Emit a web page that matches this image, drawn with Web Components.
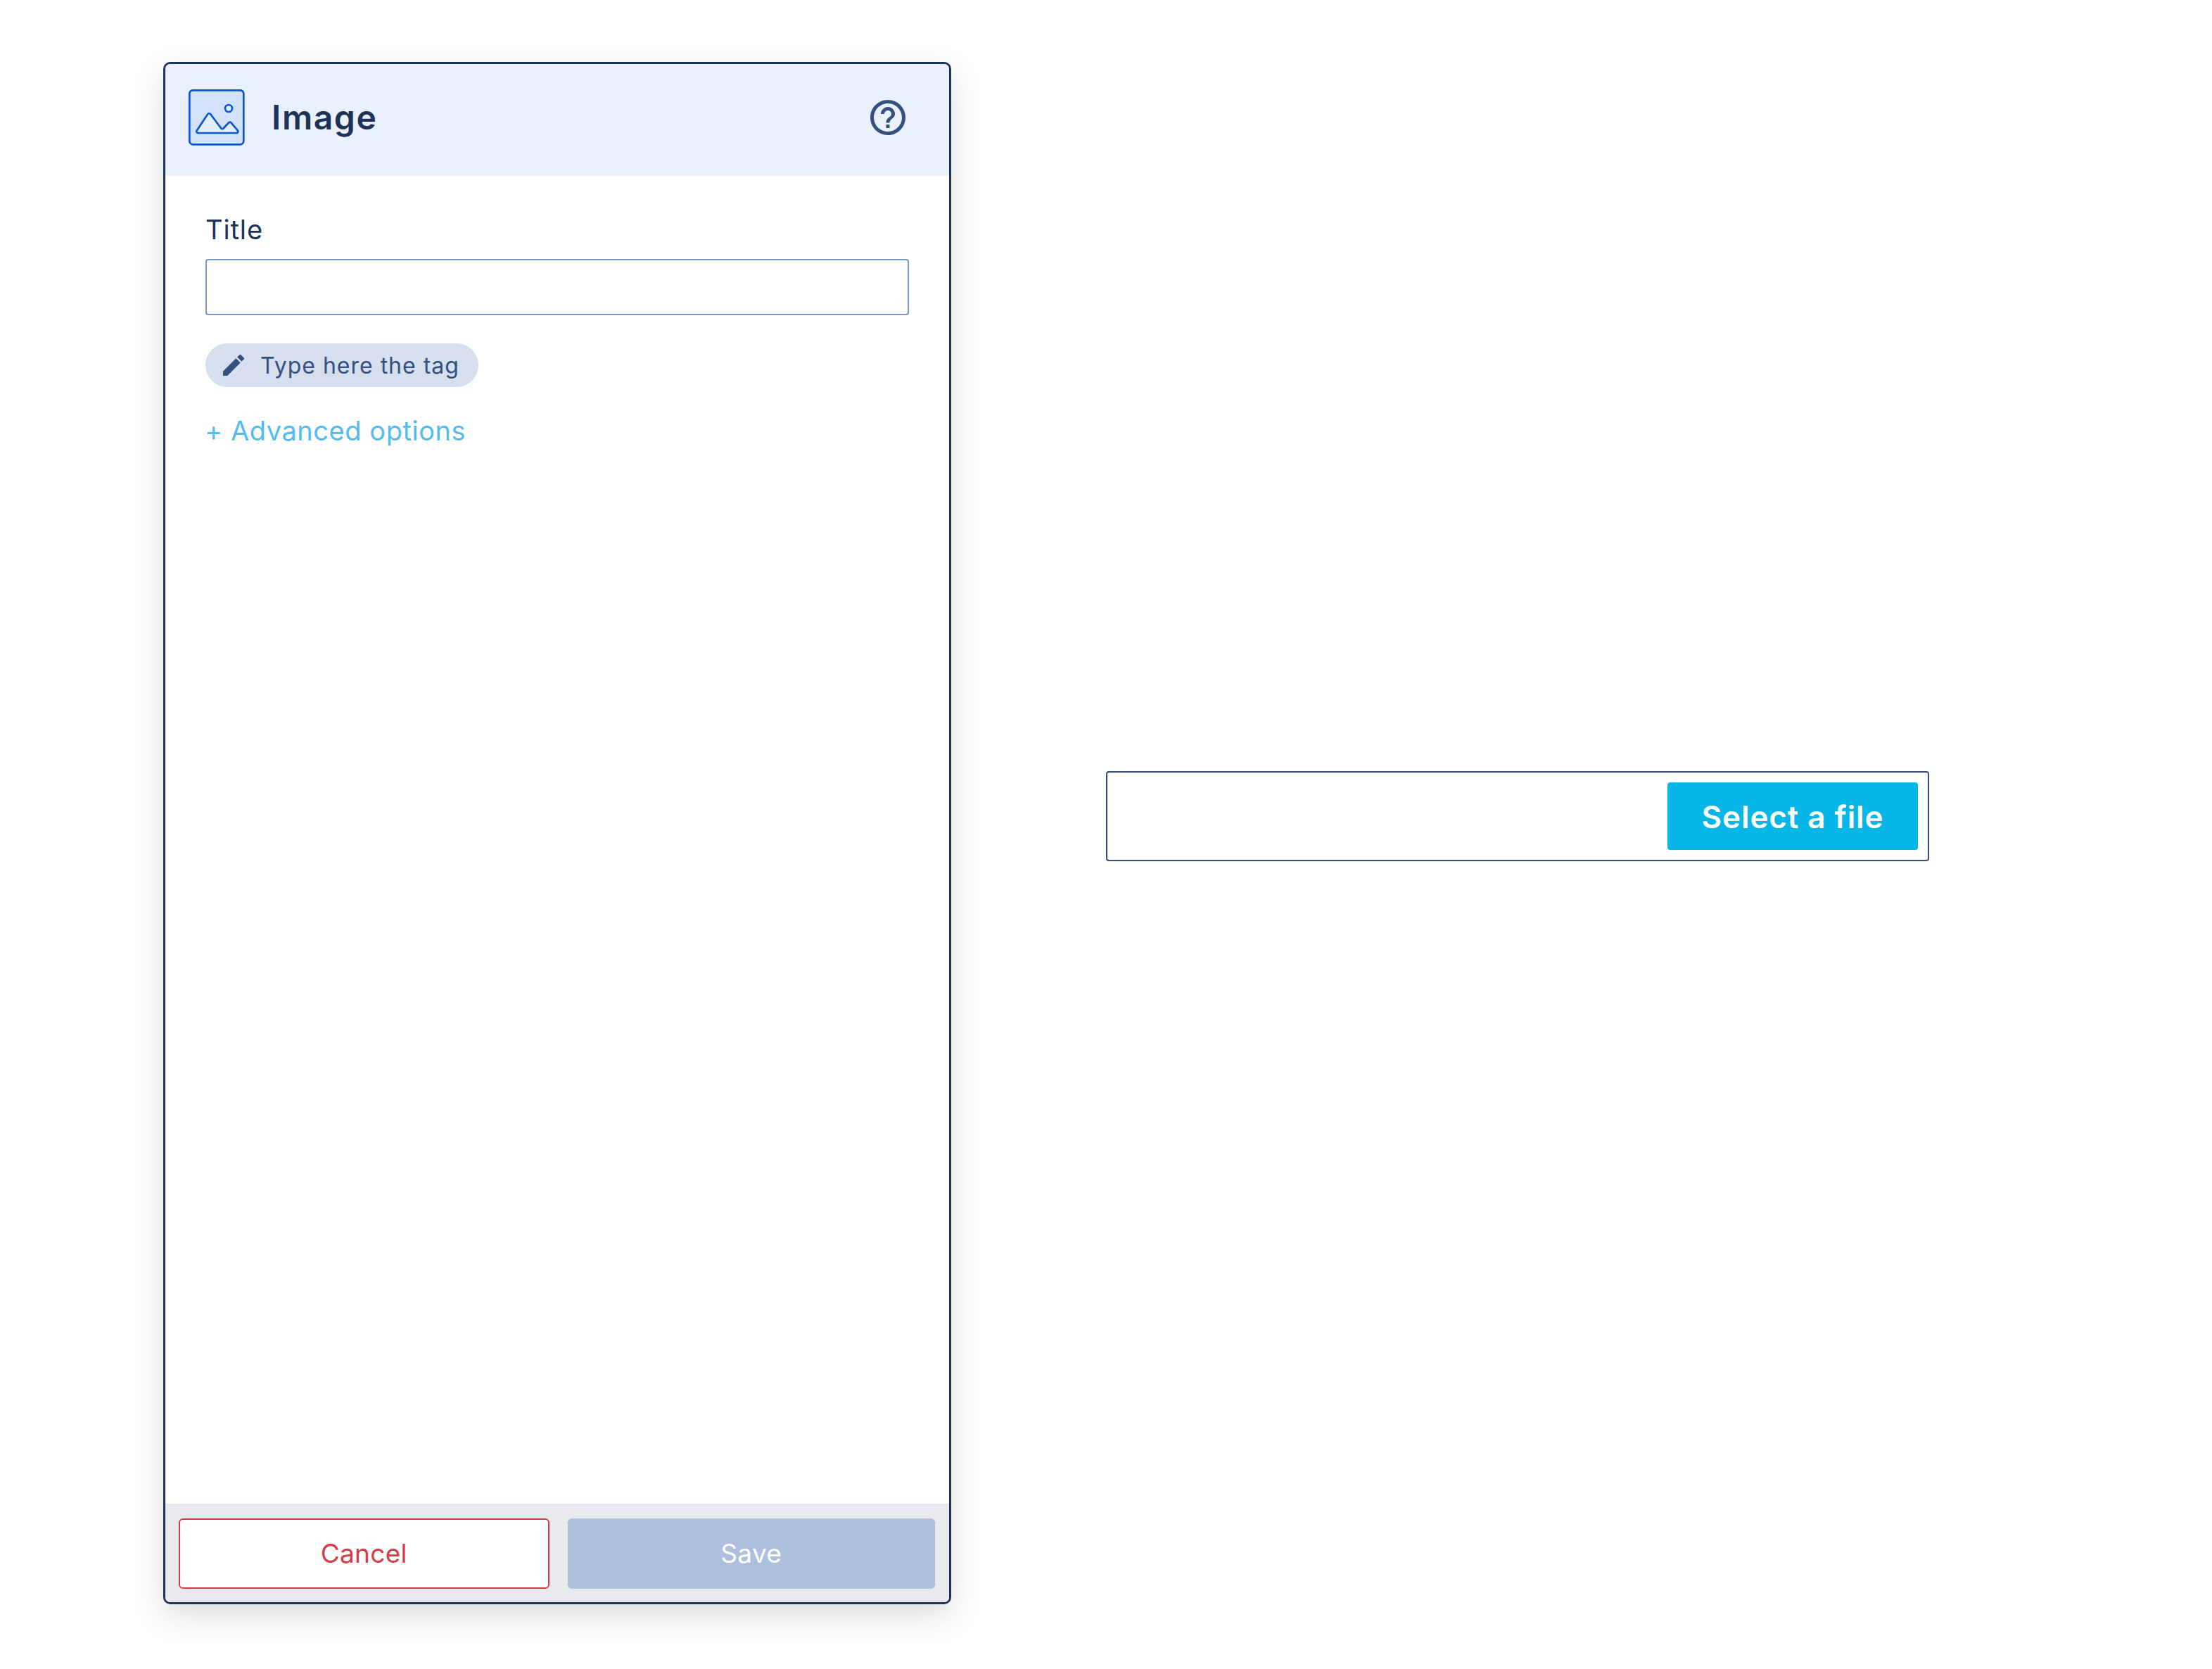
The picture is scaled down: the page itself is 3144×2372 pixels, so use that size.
<!DOCTYPE html>
<html lang="en">
<head>
<meta charset="utf-8">
<title>Image</title>
<style>
    html, body { margin: 0; background: #fff; }
    body { font-family: Inter, "Liberation Sans", sans-serif; }
    .stage { display: flex; align-items: flex-start; padding: 88px 0 0 232px; gap: 220px; height: 2372px; box-sizing: border-box; overflow: hidden; }
</style>
</head>
<body>
<div class="stage">
    <image-panel heading="Image">
        <form-field label="Title"></form-field>
        <tag-chip>Type here the tag</tag-chip>
        <text-link>+ Advanced options</text-link>
        <action-button slot="footer" kind="cancel">Cancel</action-button>
        <action-button slot="footer" kind="save">Save</action-button>
    </image-panel>
    <file-picker>Select a file</file-picker>
</div>

<script>
// Panel with header, form body and footer bar
class ImagePanel extends HTMLElement {
    constructor() {
        super();
        this.attachShadow({ mode: 'open' });
        this.shadowRoot.innerHTML = `
            <style>
                :host {
                    display: flex;
                    flex-direction: column;
                    box-sizing: border-box;
                    width: 1120px;
                    height: 2192px;
                    border: 3px solid #1d3358;
                    border-radius: 10px;
                    background: #fff;
                    box-shadow: 0 16px 44px rgba(20, 30, 50, 0.15);
                    overflow: hidden;
                }
                header {
                    display: flex;
                    align-items: center;
                    height: 159px;
                    flex: none;
                    box-sizing: border-box;
                    padding: 0 57px 8px 33px;
                    background: #eaf1fd;
                }
                .glyph { width: 80px; height: 80px; flex: none; display: block; }
                h1 {
                    flex: 1;
                    margin: 0 0 0 38px;
                    font: 600 48px Inter, "Liberation Sans", sans-serif;
                    letter-spacing: 1.6px;
                    color: #1c3357;
                }
                .help { width: 60px; height: 60px; display: block; fill: #33507e; }
                main {
                    flex: 1;
                    display: flex;
                    flex-direction: column;
                    align-items: flex-start;
                    padding: 52px 57px 0;
                }
                footer {
                    display: flex;
                    flex: none;
                    gap: 26px;
                    height: 140px;
                    box-sizing: border-box;
                    padding: 21px 20px 19px 19px;
                    background: #e8eaee;
                }
            </style>
            <header>
                <svg class="glyph" viewBox="0 0 80 80">
                    <rect x="1.300" y="1.300" width="77" height="77" rx="5" fill="#d3e1fa" stroke="#0a55d0" stroke-width="2.700"/>
                    <circle cx="57" cy="27" r="5" fill="#e5eefc" stroke="#0a55d0" stroke-width="2.700"/>
                    <path d="M13.500 62h54.500c2 0 3-2 1.800-3.600L60.500 47.500c-1-1.200-2.500-1.200-3.500 0l-7.500 8c-1 1-2.500 1-3.300-.2L31 35c-1-1.300-2.700-1.300-3.600 0L11.800 58.400C10.600 60 11.500 62 13.500 62z" fill="#e5eefc" stroke="#0a55d0" stroke-width="2.700" stroke-linejoin="round"/>
                </svg>
                <h1></h1>
                <svg class="help" viewBox="0 0 24 24"><path d="M11 18h2v-2h-2v2zm1-16C6.480 2 2 6.480 2 12s4.480 10 10 10 10-4.480 10-10S17.520 2 12 2zm0 18c-4.410 0-8-3.590-8-8s3.590-8 8-8 8 3.590 8 8-3.590 8-8 8zm0-14c-2.210 0-4 1.790-4 4h2c0-1.100.9-2 2-2s2 .9 2 2c0 2-3 1.750-3 5h2c0-2.250 3-2.500 3-5 0-2.210-1.790-4-4-4z"/></svg>
            </header>
            <main><slot></slot></main>
            <footer><slot name="footer"></slot></footer>
        `;
    }

    connectedCallback() {
        this.shadowRoot.querySelector('h1').textContent = this.getAttribute('heading') || '';
    }
}

class FormField extends HTMLElement {
    constructor() {
        super();
        this.attachShadow({ mode: 'open' });
        this.shadowRoot.innerHTML = `
            <style>
                :host { display: block; width: 1000px; }
                label {
                    display: block;
                    margin-bottom: 18px;
                    font: 400 38px/48px Inter, "Liberation Sans", sans-serif;
                    letter-spacing: 0.9px;
                    color: #1c3357;
                }
                .box {
                    display: block;
                    box-sizing: border-box;
                    width: 100%;
                    height: 80px;
                    border: 2px solid #7b96bf;
                    border-radius: 4px;
                    background: #fff;
                }
            </style>
            <label></label>
            <div class="box"></div>
        `;
    }

    connectedCallback() {
        this.shadowRoot.querySelector('label').textContent = this.getAttribute('label') || '';
    }
}

class TagChip extends HTMLElement {
    constructor() {
        super();
        this.attachShadow({ mode: 'open' });
        this.shadowRoot.innerHTML = `
            <style>
                :host {
                    display: inline-flex;
                    align-items: center;
                    box-sizing: border-box;
                    height: 62px;
                    margin-top: 40px;
                    padding: 0 27px 0 20px;
                    border-radius: 31px;
                    background: #d5dfee;
                    font: 400 32px Inter, "Liberation Sans", sans-serif;
                    letter-spacing: 1px;
                    color: #33507e;
                }
                svg { width: 40px; height: 40px; margin-right: 18px; fill: #33507e; display: block; }
            </style>
            <svg viewBox="0 0 24 24"><path d="M3 17.250V21h3.750L17.810 9.940l-3.750-3.750L3 17.250zM20.710 7.040c.39-.39.39-1.020 0-1.410l-2.340-2.340c-.39-.39-1.020-.39-1.410 0l-1.830 1.830 3.750 3.750 1.830-1.830z"/></svg>
            <slot></slot>
        `;
    }
}

class TextLink extends HTMLElement {
    constructor() {
        super();
        this.attachShadow({ mode: 'open' });
        this.shadowRoot.innerHTML = `
            <style>
                :host {
                    display: block;
                    margin-top: 38px;
                    margin-left: -1px;
                    font: 400 38px/48px Inter, "Liberation Sans", sans-serif;
                    letter-spacing: 0.55px;
                    color: #55bbed;
                    cursor: pointer;
                }
            </style>
            <slot></slot>
        `;
    }
}

class ActionButton extends HTMLElement {
    constructor() {
        super();
        this.attachShadow({ mode: 'open' });
        this.shadowRoot.innerHTML = `
            <style>
                :host {
                    display: flex;
                    flex: 1;
                    align-items: center;
                    justify-content: center;
                    box-sizing: border-box;
                    height: 100px;
                    border-radius: 6px;
                    padding-bottom: 2px;
                    font: 400 37px Inter, "Liberation Sans", sans-serif;
                    letter-spacing: 0.3px;
                }
                :host([kind="cancel"]) { background: #fff; border: 2px solid #d63b47; color: #d63b47; }
                :host([kind="save"]) { background: #acbfdd; color: #fff; }
            </style>
            <slot></slot>
        `;
    }
}

class FilePicker extends HTMLElement {
    constructor() {
        super();
        this.attachShadow({ mode: 'open' });
        this.shadowRoot.innerHTML = `
            <style>
                :host {
                    display: flex;
                    justify-content: flex-end;
                    box-sizing: border-box;
                    width: 1170px;
                    height: 128px;
                    margin-top: 1008px;
                    padding: 14px;
                    border: 2px solid #34507a;
                    border-radius: 4px;
                    background: #fff;
                }
                button {
                    width: 356px;
                    height: 96px;
                    padding: 2px 0 0;
                    border: 0;
                    border-radius: 4px;
                    background: #06b6e6;
                    color: #fff;
                    font: 600 44px Inter, "Liberation Sans", sans-serif;
                    letter-spacing: 0.9px;
                }
            </style>
            <button><slot></slot></button>
        `;
    }
}

customElements.define('image-panel', ImagePanel);
customElements.define('form-field', FormField);
customElements.define('tag-chip', TagChip);
customElements.define('text-link', TextLink);
customElements.define('action-button', ActionButton);
customElements.define('file-picker', FilePicker);
</script>
</body>
</html>
